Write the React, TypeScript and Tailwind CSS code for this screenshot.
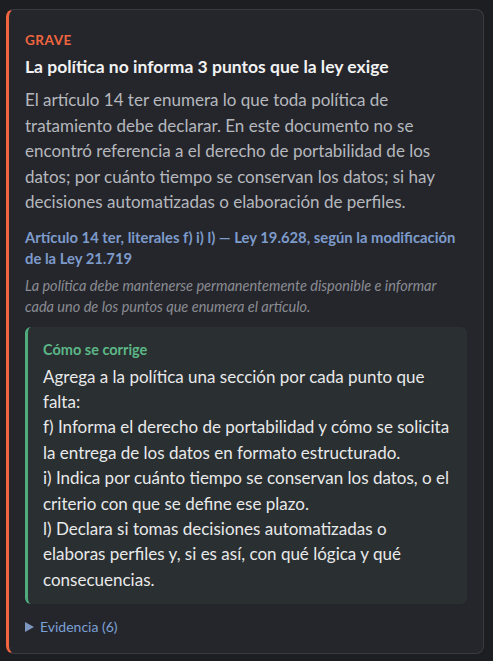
import React from 'react';

const font = { fontFamily: 'Lato, "Noto Sans", sans-serif' };

export default function App() {
  return (
    <div className="min-h-screen bg-[#1d1e22] pt-[9px] pl-[6px] pr-[9px] pb-2" style={font}>
      <div className="rounded-lg border border-[#3a3b40] border-l-[3px] border-l-[#f0653f] bg-[#25262b] pl-4 pr-4 pt-[21px] pb-4">
        <div className="text-[13.5px] font-bold uppercase tracking-[0.04em] leading-[18px] text-[#f0653f]">Grave</div>
        <h3 className="mt-1.5 text-[17.5px] font-bold leading-6 text-[#f2f2f3]">
          La política no informa 3 puntos que la ley exige
        </h3>
        <p className="mt-2 text-[17px] leading-[25.5px] text-[#b5b8be]">
          El artículo 14 ter enumera lo que toda política de tratamiento debe declarar. En este documento no se
          encontró referencia a el derecho de portabilidad de los datos; por cuánto tiempo se conservan los datos;
          si hay decisiones automatizadas o elaboración de perfiles.
        </p>
        <p className="mt-3 text-[14.8px] font-bold leading-[21px] text-[#7d9bcb]">
          Artículo 14 ter, literales f) i) l) — Ley 19.628, según la modificación de la Ley 21.719
        </p>
        <p className="mt-1.5 text-[14.5px] italic leading-[21px] text-[#8a8c93]">
          La política debe mantenerse permanentemente disponible e informar cada uno de los puntos que enumera el
          artículo.
        </p>
        <div className="mt-[10px] rounded-md border-l-[3px] border-l-[#4fab7c] bg-[#2a2f31] pl-[15px] pr-[14px] pt-[13px] pb-[12px]">
          <div className="text-[14.5px] font-bold leading-5 text-[#5cb787]">Cómo se corrige</div>
          <p className="mt-1 text-[17px] leading-[25.4px] text-[#e8e9ea]">
            Agrega a la política una sección por cada punto que falta:
            <br />
            f) Informa el derecho de portabilidad y cómo se solicita la entrega de los datos en formato estructurado.
            <br />
            i) Indica por cuánto tiempo se conservan los datos, o el criterio con que se define ese plazo.
            <br />
            l) Declara si tomas decisiones automatizadas o elaboras perfiles y, si es así, con qué lógica y qué
            consecuencias.
          </p>
        </div>
        <details className="mt-[13px]">
          <summary className="flex cursor-pointer list-none items-center gap-[6px] text-[14px] leading-5 text-[#7ba0d6]">
            <svg width="9" height="10" viewBox="0 0 9 10" className="shrink-0">
              <polygon points="0,0 9,5 0,10" fill="#7d96bf" />
            </svg>
            Evidencia (6)
          </summary>
        </details>
      </div>
    </div>
  );
}
